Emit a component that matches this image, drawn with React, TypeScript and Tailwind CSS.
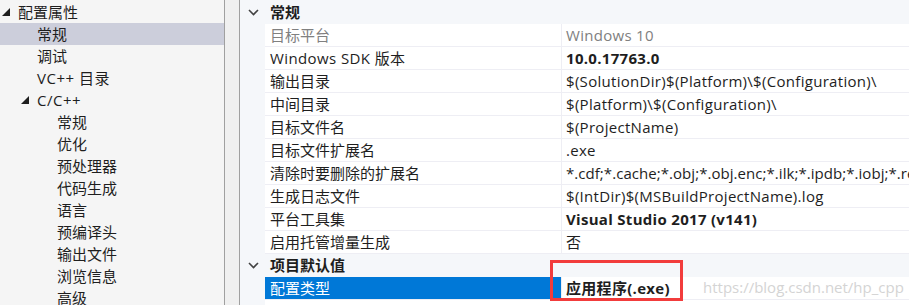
import React from "react";

const font = {
  fontFamily: '"Open Sans", "Noto Sans CJK SC", sans-serif',
};

function Tri() {
  return (
    <svg width="8" height="8" viewBox="0 0 8 8" className="shrink-0">
      <polygon points="8,0 8,8 0,8" fill="#1e1e1e" />
    </svg>
  );
}

function Chevron() {
  return (
    <svg width="11" height="7" viewBox="0 0 11 7">
      <polyline points="1,1 5.5,5.5 10,1" fill="none" stroke="#424242" strokeWidth="1.6" />
    </svg>
  );
}

type LeftItem = { text: string; indent: number; tri?: boolean; selected?: boolean; latin?: boolean };

const leftItems: LeftItem[] = [
  { text: "配置属性", indent: 0, tri: true },
  { text: "常规", indent: 1, selected: true },
  { text: "调试", indent: 1 },
  { text: "VC++ 目录", indent: 1, latin: true },
  { text: "C/C++", indent: 1, tri: true, latin: true },
  { text: "常规", indent: 2 },
  { text: "优化", indent: 2 },
  { text: "预处理器", indent: 2 },
  { text: "代码生成", indent: 2 },
  { text: "语言", indent: 2 },
  { text: "预编译头", indent: 2 },
  { text: "输出文件", indent: 2 },
  { text: "浏览信息", indent: 2 },
  { text: "高级", indent: 2 },
];

type Row = {
  name: string;
  value: string;
  gray?: boolean;
  bold?: boolean;
  latinName?: boolean;
  tight?: boolean;
};

const rows: Row[] = [
  { name: "目标平台", value: "Windows 10", gray: true },
  { name: "Windows SDK 版本", value: "10.0.17763.0", bold: true, latinName: true },
  { name: "输出目录", value: "$(SolutionDir)$(Platform)\\$(Configuration)\\" },
  { name: "中间目录", value: "$(Platform)\\$(Configuration)\\" },
  { name: "目标文件名", value: "$(ProjectName)" },
  { name: "目标文件扩展名", value: ".exe" },
  {
    name: "清除时要删除的扩展名",
    value: "*.cdf;*.cache;*.obj;*.obj.enc;*.ilk;*.ipdb;*.iobj;*.resources;*.tlb",
    tight: true,
  },
  { name: "生成日志文件", value: "$(IntDir)$(MSBuildProjectName).log" },
  { name: "平台工具集", value: "Visual Studio 2017 (v141)", bold: true },
  { name: "启用托管增量生成", value: "否" },
];

export default function App() {
  return (
    <div
      className="w-[909px] h-[305px] flex overflow-hidden bg-white text-[15px] text-[#1e1e1e] leading-none"
      style={font}
    >
      {/* Left tree */}
      <div className="w-[224px] shrink-0 bg-[#f5f5f5] flex flex-col pt-[1px]">
        {leftItems.map((it, i) => (
          <div
            key={i}
            className={
              "h-[22px] shrink-0 flex items-center whitespace-nowrap " +
              (it.selected ? "bg-[#cccedb]" : "")
            }
          >
            {it.indent === 0 && (
              <div className="flex items-center">
                <div className="w-[2px]" />
                <Tri />
                <div className="w-[8px]" />
              </div>
            )}
            {it.indent === 1 && (
              <div className="w-[37px] shrink-0 flex items-center">
                {it.tri && (
                  <div className="pl-[21px] flex items-center">
                    <Tri />
                  </div>
                )}
              </div>
            )}
            {it.indent === 2 && <div className="w-[57px] shrink-0" />}
            <span className={it.latin ? "tracking-[0.5px]" : ""}>{it.text}</span>
          </div>
        ))}
      </div>

      {/* Splitter */}
      <div className="w-[16px] shrink-0 border-l border-r border-[#a0a0a0] bg-[#f0f0f0]" />

      {/* Property grid */}
      <div className="flex-1 flex flex-col bg-white relative">
        <div className="h-[24px] shrink-0 flex items-center bg-[#f5f7fa]">
          <div className="w-[25px] shrink-0 flex justify-center pl-[1px]">
            <Chevron />
          </div>
          <span className="pl-[5px] font-bold">常规</span>
        </div>
        {rows.map((r, i) => (
          <div key={i} className="h-[23px] shrink-0 flex">
            <div className="w-[25px] shrink-0 bg-[#f5f7fa]" />
            <div
              className={
                "w-[296px] shrink-0 flex items-center pl-[5px] border-b border-[#eeeef4] whitespace-nowrap " +
                (r.gray ? "text-[#808080] " : "") +
                (r.latinName ? "tracking-[0.4px]" : "")
              }
            >
              {r.name}
            </div>
            <div
              className={
                "flex-1 flex items-center pl-[4px] border-l border-b border-[#eeeef4] whitespace-nowrap overflow-hidden " +
                (r.tight ? "tracking-[0.05px] " : "tracking-[0.3px] ") +
                (r.gray ? "text-[#808080] " : "") +
                (r.bold ? "font-bold" : "")
              }
            >
              {r.value}
            </div>
          </div>
        ))}
        <div className="h-[23px] shrink-0 flex items-center bg-[#f5f7fa]">
          <div className="w-[25px] shrink-0 flex justify-center pl-[1px]">
            <Chevron />
          </div>
          <span className="pl-[5px] font-bold">项目默认值</span>
        </div>
        <div className="h-[23px] shrink-0 flex">
          <div className="w-[25px] shrink-0 bg-[#f5f7fa]" />
          <div className="w-[296px] shrink-0 flex items-center pl-[5px] bg-[#0078d7] text-white border-b border-[#eeeef4]">
            配置类型
          </div>
          <div className="flex-1 flex items-center pl-[4px] border-l border-b border-[#eeeef4] font-bold whitespace-nowrap relative tracking-[0.3px]">
            应用程序(.exe)
            <span className="absolute left-[141px] top-[3px] text-[15px] font-normal tracking-normal text-[#d4d4d4]">
              https://blog.csdn.net/hp_cpp
            </span>
          </div>
        </div>
        <div className="flex-1 flex">
          <div className="w-[25px] shrink-0 bg-[#f5f7fa]" />
        </div>
        {/* annotation box */}
        <div className="absolute left-[310px] top-[260px] w-[133px] h-[41px] border-[3px] border-[#f23c3c]" />
      </div>
    </div>
  );
}
